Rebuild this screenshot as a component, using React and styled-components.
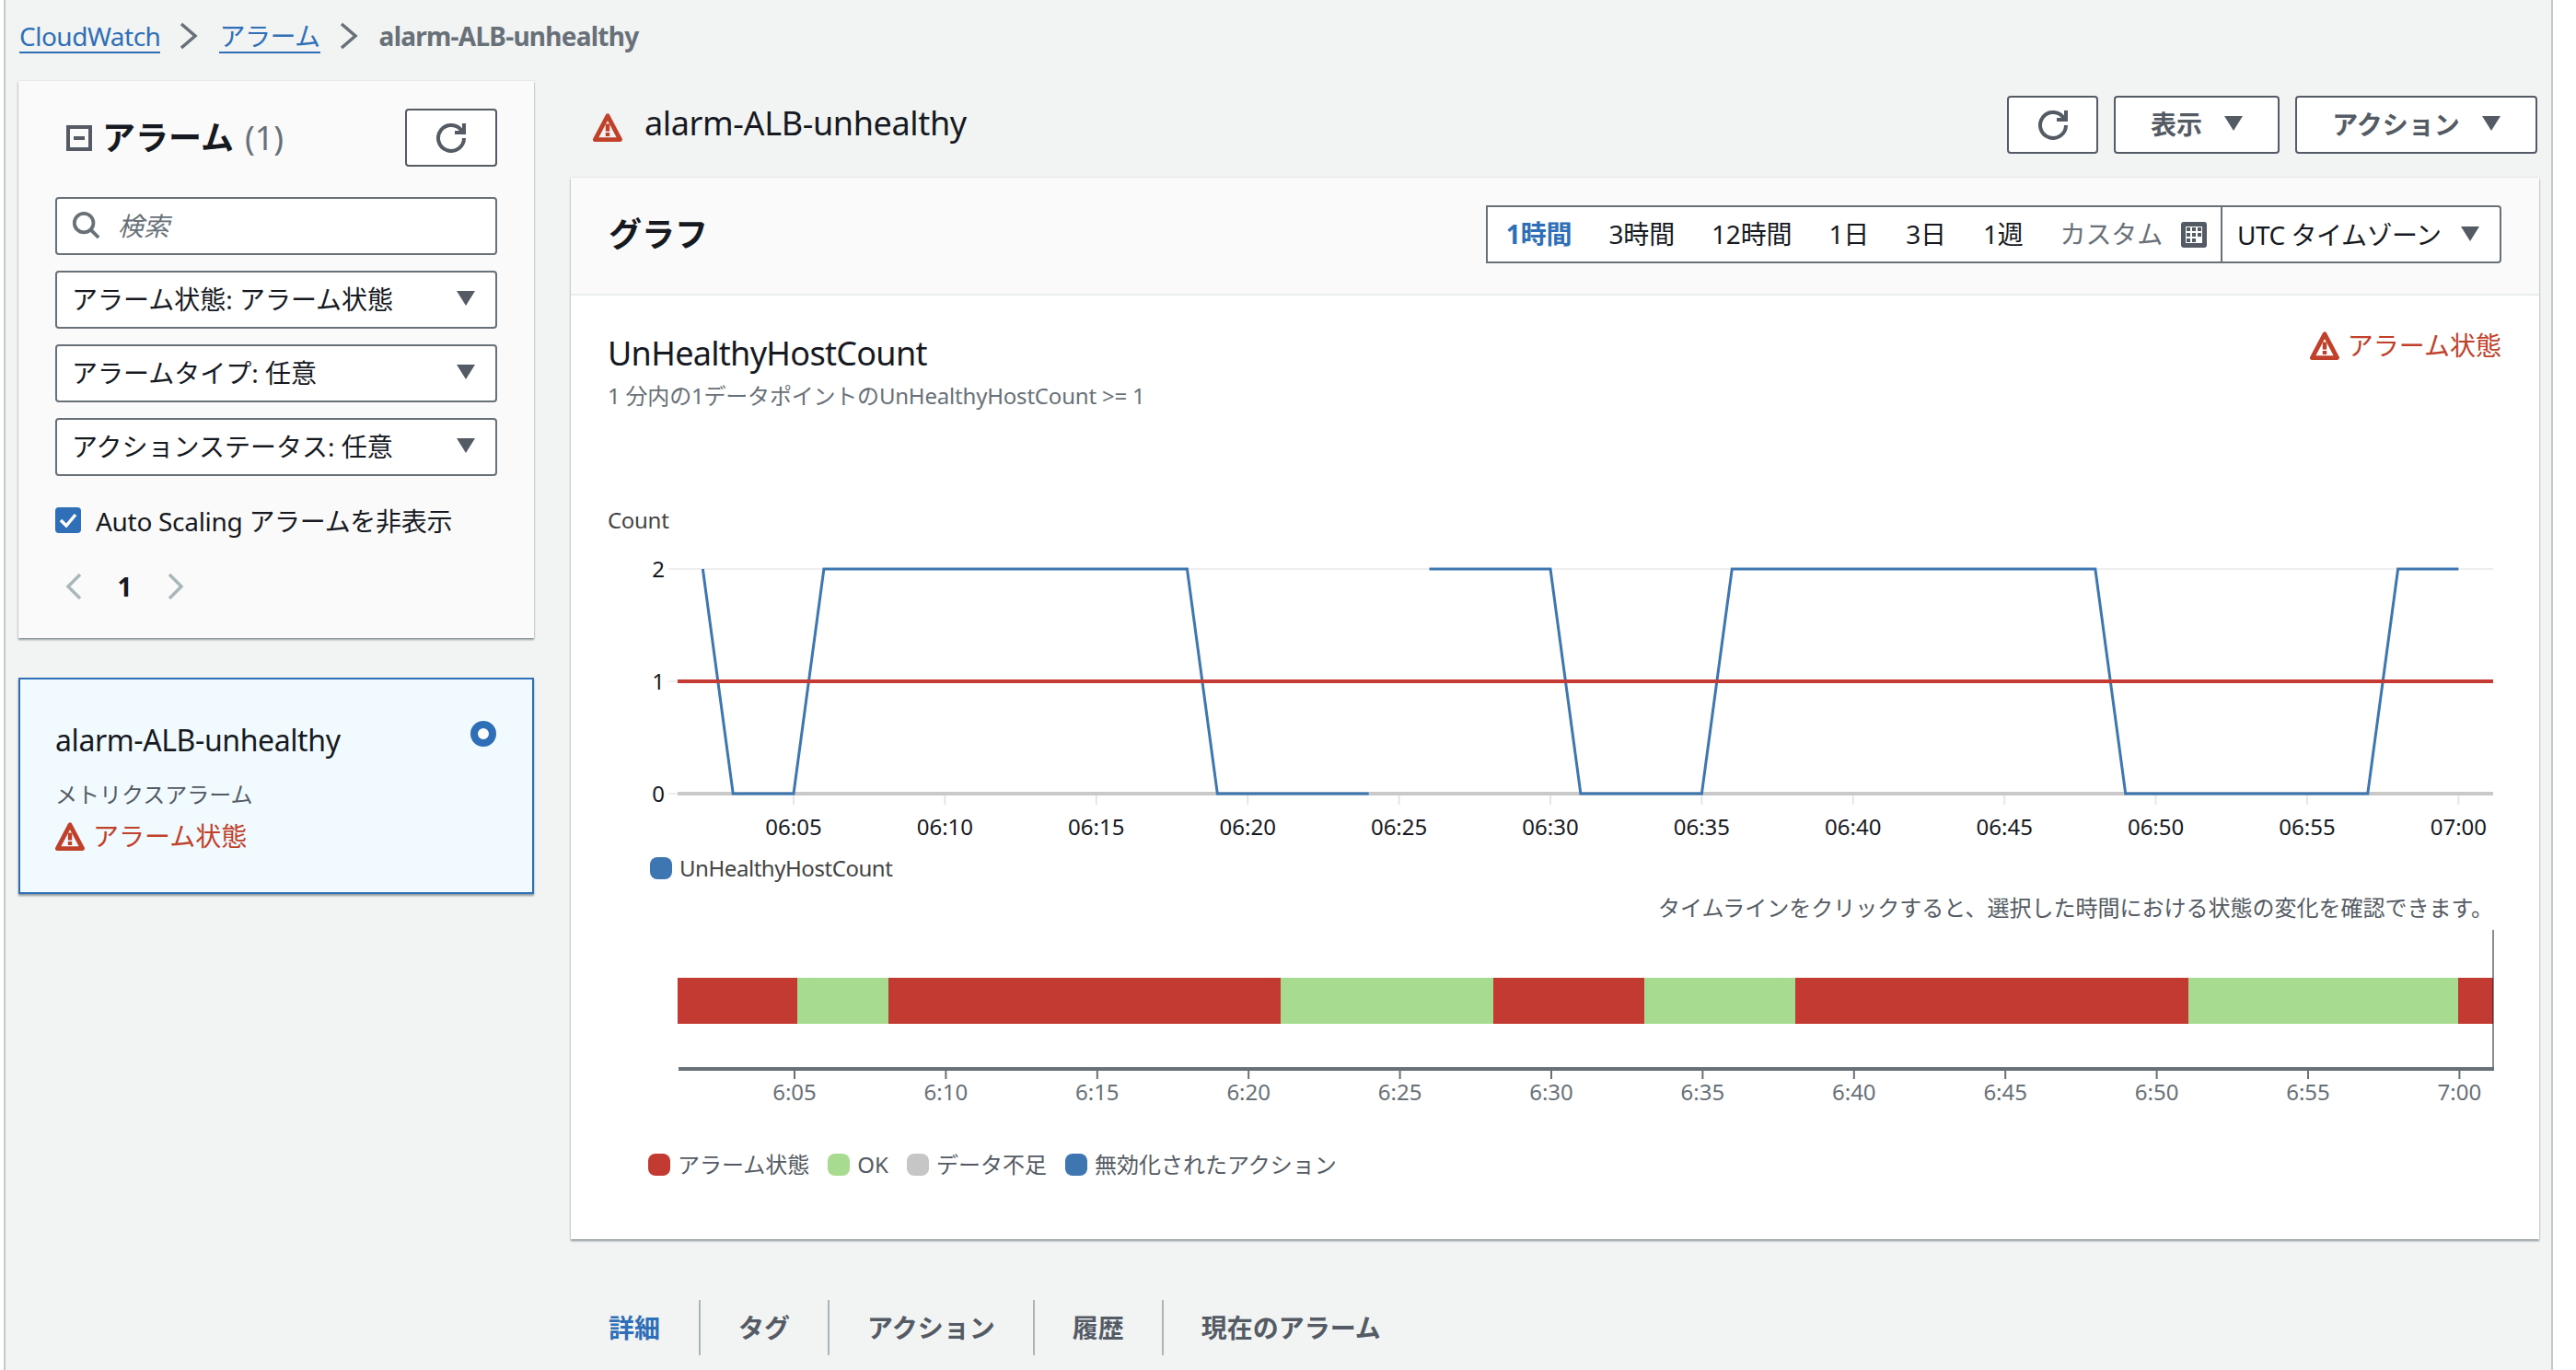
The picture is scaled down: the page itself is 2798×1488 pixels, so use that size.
import React from 'react'
import styled, { createGlobalStyle } from 'styled-components'

const BLUE = '#2f6fb7'
const RED = '#c0402a'
const FONT = `"Noto Sans", "Noto Sans CJK JP", sans-serif`

const GlobalStyle = createGlobalStyle`
html, body {
    margin: 0;
    padding: 0;
    background: #fff;
    font-family: ${FONT};
    color: #16191f;
    overflow: hidden;
}
* { box-sizing: border-box; }
`

const Shell = styled.div`
width: 2769px;
height: 1488px;
margin-left: 4px;
padding: 0 12px 0 14px;
background: #f2f3f3;
border-left: 2px solid #c6c8c8;
border-right: 2px solid #c6c8c8;
overflow: hidden;
`

const Breadcrumbs = styled.nav`
height: 88px;
display: flex;
align-items: flex-start;
padding-top: 20px;
padding-left: 1px;
font-size: 28px;
line-height: 40px;
`

const Crumb = styled.a`
color: ${BLUE};
border-bottom: 2px solid ${BLUE};
height: 38px;
line-height: 38px;
letter-spacing: -0.5px;
`

const CrumbSep = styled.svg`
width: 24px;
height: 32px;
margin: 3px 20px 0 20px;
fill: none;
stroke: #687078;
stroke-width: 3.5;
`

const CrumbCurrent = styled.span`
color: #687078;
font-weight: 700;
line-height: 38px;
letter-spacing: -0.75px;
`

const Columns = styled.div`
display: flex;
align-items: flex-start;
gap: 40px;
`

const Sidebar = styled.aside`
width: 560px;
flex: none;
display: flex;
flex-direction: column;
gap: 43px;
`

const Card = styled.section`
background: #fafafa;
box-shadow: 0 2px 2px rgba(0, 28, 36, 0.4), 0 0 2px rgba(0, 28, 36, 0.15);
`

const FilterCard = styled(Card)`
height: 605px;
padding: 30px 40px 0;
display: flex;
flex-direction: column;
`

const FilterHead = styled.div`
display: flex;
align-items: center;
height: 63px;
margin-bottom: 33px;
padding-left: 12px;
`

const FilterTitle = styled.h2`
margin: 0 0 0 11px;
flex: 1;
font-size: 36px;
font-weight: 700;
line-height: 44px;
`

const Count = styled.span`
color: #687078;
font-weight: 400;
margin-left: 12px;
`

const IconButton = styled.button`
flex: none;
width: ${p => p.$width}px;
height: 63px;
padding: 0;
background: #fff;
border: 2px solid #545b64;
border-radius: 4px;
display: flex;
align-items: center;
justify-content: center;
`

const Field = styled.div`
height: 63px;
padding: 0 22px 3px 16px;
margin-bottom: 17px;
background: #fff;
border: 2px solid #687078;
border-radius: 4px;
display: flex;
align-items: center;
justify-content: space-between;
font-size: 28px;
white-space: nowrap;
`

const SearchField = styled(Field)`
justify-content: flex-start;
gap: 20px;
color: #687078;
font-style: italic;
`

const CheckRow = styled.label`
display: flex;
align-items: center;
gap: 16px;
height: 32px;
margin-top: 15px;
font-size: 28px;
letter-spacing: -0.3px;
white-space: nowrap;
`

const CheckBox = styled.span`
width: 28px;
height: 28px;
border-radius: 4px;
background: ${BLUE};
display: flex;
align-items: center;
justify-content: center;
`

const Pager = styled.div`
display: flex;
align-items: center;
height: 32px;
margin-top: 40px;
padding-left: 11px;
`

const PageNumber = styled.span`
width: 93px;
text-align: center;
font-size: 28px;
font-weight: 700;
`

const AlarmCard = styled.section`
height: 235px;
padding: 42px 38px 0;
background: #f1faff;
border: 2px solid ${BLUE};
box-shadow: 0 2px 2px rgba(0, 28, 36, 0.4);
display: flex;
flex-direction: column;
`

const AlarmName = styled.div`
display: flex;
align-items: flex-start;
justify-content: space-between;
font-size: 32px;
line-height: 48px;
letter-spacing: -0.4px;
`

const Radio = styled.span`
width: 28px;
height: 28px;
margin: 3px 1px 0 0;
border-radius: 50%;
border: 8px solid ${BLUE};
background: #fff;
`

const AlarmType = styled.div`
margin: 18px 0 10px;
font-size: 24px;
line-height: 34px;
color: #545b64;
`

const Status = styled.div`
display: flex;
align-items: center;
gap: 9px;
color: ${RED};
font-size: 28px;
line-height: 36px;
`

const MetricStatus = styled(Status)`
margin-top: -2px;
`

const Main = styled.main`
width: 2138px;
flex: none;
`

const MainHead = styled.header`
height: 105px;
padding: 16px 2px 0 24px;
display: flex;
align-items: flex-start;
`

const HeadIcon = styled.span`
display: flex;
height: 63px;
align-items: center;
padding-top: 4px;
`

const AlarmTitle = styled.h1`
flex: 1;
margin: 0 0 0 24px;
font-size: 36px;
font-weight: 400;
line-height: 59px;
letter-spacing: -0.37px;
`

const ActionRow = styled.div`
display: flex;
gap: 17px;
`

const ActionButton = styled.button`
height: 63px;
width: ${p => p.$width}px;
padding: 0 0 3px;
background: #fff;
border: 2px solid #545b64;
border-radius: 4px;
display: flex;
align-items: center;
justify-content: center;
gap: 24px;
font-family: inherit;
font-size: 28px;
font-weight: 700;
color: #545b64;
`

const GraphCard = styled.section`
height: 1153px;
background: #fff;
box-shadow: 0 2px 2px rgba(0, 28, 36, 0.4), 0 0 2px rgba(0, 28, 36, 0.15);
`

const GraphHead = styled.div`
height: 128px;
padding: 0 41px 3px;
background: #fafafa;
border-bottom: 2px solid #eaeded;
display: flex;
align-items: center;
justify-content: space-between;
`

const GraphTitle = styled.h2`
margin: 0 0 5px;
font-size: 36px;
font-weight: 700;
`

const RangeGroup = styled.div`
height: 63px;
display: flex;
background: #fff;
border: 2px solid #687078;
border-radius: 0 4px 4px 0;
font-size: 28px;
white-space: nowrap;
`

const RangeItem = styled.span`
padding: 0 20px;
line-height: 59px;
letter-spacing: -0.15px;
color: ${p => (p.$active ? BLUE : p.$muted ? '#687078' : '#16191f')};
font-weight: ${p => (p.$active ? 700 : 400)};
`

const CalendarSlot = styled.span`
display: flex;
align-items: center;
padding-right: 15px;
`

const ZoneSelect = styled.span`
width: 303px;
padding: 0 22px 1px 16px;
border-left: 2px solid #687078;
display: flex;
align-items: center;
justify-content: space-between;
letter-spacing: -0.5px;
`

const MetricHead = styled.div`
padding: 38px 41px 0 40px;
display: flex;
justify-content: space-between;
align-items: flex-start;
`

const MetricTitle = styled.h3`
margin: 0;
font-size: 36px;
font-weight: 400;
line-height: 50px;
letter-spacing: -0.7px;
`

const MetricNote = styled.p`
margin: 4px 0 0;
padding: 0 41px 0 40px;
font-size: 24px;
line-height: 34px;
letter-spacing: -0.2px;
color: #687078;
`

const AxisName = styled.div`
margin-top: 101px;
padding: 0 40px;
font-size: 24px;
line-height: 34px;
letter-spacing: -0.3px;
color: #444;
`

const ChartSvg = styled.svg`
display: block;
width: 2138px;
height: ${p => p.$height}px;
margin-top: ${p => p.$top || 0}px;
`

const ChartText = styled.text`
font-family: ${FONT};
font-size: 24px;
fill: ${p => p.$color || '#16191f'};
text-anchor: ${p => p.$anchor || 'middle'};
`

const Legend = styled.ul`
list-style: none;
margin: ${p => p.$top || 0}px 0 0;
padding: 0 0 0 ${p => p.$left}px;
display: flex;
gap: 20px;
font-size: 24px;
line-height: 34px;
letter-spacing: ${p => p.$spacing || 0}px;
color: ${p => p.$color};
`

const LegendItem = styled.li`
display: flex;
align-items: center;
gap: 8px;
`

const Swatch = styled.span`
width: 24px;
height: 24px;
border-radius: 8px;
background: ${p => p.$color};
`

const TimelineHint = styled.p`
margin: 9px 0 0;
padding-right: 50px;
text-align: right;
font-size: 24px;
line-height: 34px;
color: #545b64;
`

const Tabs = styled.nav`
margin-top: 66px;
height: 60px;
display: flex;
align-items: center;
font-size: 28px;
font-weight: 700;
color: #545b64;
`

const Tab = styled.span`
padding: 0 41px;
line-height: 60px;
border-left: 2px solid #aab7b8;
color: ${p => (p.$active ? BLUE : '#545b64')};
&:first-child { border-left: 0; padding-right: 42px; }
`

const Warning = ({ size = 32 }) => (
    <svg width={size} height={size} viewBox="0 0 16 16" style={{ flex: 'none' }}>
        <path d="M8 1.9 1.2 14.8h13.6z" fill="none" stroke={RED} strokeWidth="2.4" strokeLinejoin="round" />
        <rect x="6.9" y="6.3" width="2.2" height="4" fill={RED} />
        <rect x="6.9" y="11" width="2.2" height="2" fill={RED} />
    </svg>
)

const Refresh = () => (
    <svg width="32" height="32" viewBox="0 0 16 16" fill="none" stroke="#545b64" strokeWidth="2">
        <path d="M10 5h5V0" />
        <path d="M15 8a7 7 0 1 1-1.1-3.8" />
    </svg>
)

const Caret = ({ color = '#545b64' }) => (
    <svg width="20" height="18" viewBox="0 0 20 18" style={{ flex: 'none' }}>
        <path d="M0 1h20L10 17z" fill={color} />
    </svg>
)

const Chevron = ({ dir }) => (
    <svg width="18" height="30" viewBox="0 0 18 30" fill="none" stroke="#aab7b8" strokeWidth="3.5">
        <path d={dir === 'left' ? 'M16 2 3 15l13 13' : 'M2 2l13 13L2 28'} />
    </svg>
)

const CrumbArrow = () => (
    <CrumbSep viewBox="0 0 24 32">
        <path d="M3 3l15 13L3 29" />
    </CrumbSep>
)

const Calendar = () => (
    <svg width="28" height="28" viewBox="0 0 28 28">
        <rect width="28" height="28" rx="3" fill="#545b64" />
        <rect x="5" y="5" width="18" height="18" fill="#fff" />
        <path d="M6 6h4v4H6zM12 6h4v4h-4zM18 6h4v4h-4zM6 12h4v4H6zM12 12h4v4h-4zM18 12h4v4h-4zM6 18h4v4H6zM12 18h4v4h-4z" fill="#545b64" />
    </svg>
)

const xAt = min => 862 + (min - 5) * 32.88
const Y2 = 618
const Y0 = 862
const toPoints = pts => pts.map(([m, y]) => `${xAt(m)},${y}`).join(' ')

const segments = [
    [[2, Y2], [3, Y0], [5, Y0], [6, Y2], [18, Y2], [19, Y0], [24, Y0]],
    [[26, Y2], [30, Y2], [31, Y0], [35, Y0], [36, Y2], [48, Y2], [49, Y0], [57, Y0], [58, Y2], [60, Y2]],
]

const MINUTES = [5, 10, 15, 20, 25, 30, 35, 40, 45, 50, 55, 60]
const label = (m, prefix) => {
    const h = m === 60 ? 7 : 6
    const mm = String(m % 60).padStart(2, '0')
    return `${prefix}${h}:${mm}`
}

const MetricChart = () => (
    <ChartSvg $height={330} $top={18} viewBox="620 600 2138 330">
        <line x1="726" x2="2708" y1={Y2} y2={Y2} stroke="#eeeeee" strokeWidth="2" />
        <line x1="726" x2="736" y1="740" y2="740" stroke="#eeeeee" strokeWidth="2" />
        <line x1="726" x2="736" y1={Y0} y2={Y0} stroke="#eeeeee" strokeWidth="2" />
        <line x1="736" x2="2708" y1={Y0} y2={Y0} stroke="#c9c9c9" strokeWidth="4" />
        {MINUTES.map(m => (
            <line key={m} x1={xAt(m)} x2={xAt(m)} y1="864" y2="874" stroke="#e6e6e6" strokeWidth="2" />
        ))}
        {segments.map((s, i) => (
            <polyline key={i} points={toPoints(s)} fill="none" stroke="#3d76b0" strokeWidth="3" />
        ))}
        <line x1="736" x2="2708" y1="740" y2="740" stroke="#c53a32" strokeWidth="4" />
        <ChartText x="722" y="627" $anchor="end">2</ChartText>
        <ChartText x="722" y="749" $anchor="end">1</ChartText>
        <ChartText x="722" y="871" $anchor="end">0</ChartText>
        {MINUTES.map(m => (
            <ChartText key={m} x={xAt(m)} y="907">{label(m, '0')}</ChartText>
        ))}
    </ChartSvg>
)

const timeline = [
    [736, 866, '#c33a32'],
    [866, 965, '#a7dc90'],
    [965, 1391, '#c33a32'],
    [1391, 1622, '#a7dc90'],
    [1622, 1786, '#c33a32'],
    [1786, 1950, '#a7dc90'],
    [1950, 2377, '#c33a32'],
    [2377, 2670, '#a7dc90'],
    [2670, 2708, '#c33a32'],
]

const TimelineChart = () => (
    <ChartSvg $height={200} $top={2} viewBox="620 1005 2138 200">
        {timeline.map(([a, b, c]) => (
            <rect key={a} x={a} y="1062" width={b - a} height="50" fill={c} />
        ))}
        <line x1="2708" x2="2708" y1="1010" y2="1160" stroke="#16191f" strokeWidth="1" />
        <line x1="737" x2="2709" y1="1161" y2="1161" stroke="#687078" strokeWidth="4" />
        {MINUTES.map(m => (
            <line key={m} x1={xAt(m) + 1} x2={xAt(m) + 1} y1="1161" y2="1172" stroke="#687078" strokeWidth="2" />
        ))}
        {MINUTES.map(m => (
            <ChartText key={m} x={xAt(m) + 1} y="1195" $color="#687078">{label(m, '')}</ChartText>
        ))}
    </ChartSvg>
)

const ranges = ['3時間', '12時間', '1日', '3日', '1週']
const states = [
    ['アラーム状態', '#c33a32'],
    ['OK', '#a7dc90'],
    ['データ不足', '#c6c6c6'],
    ['無効化されたアクション', '#3d76b0'],
]
const tabs = ['タグ', 'アクション', '履歴', '現在のアラーム']

const App = () => {
    return (
        <Shell>
            <GlobalStyle />
            <Breadcrumbs>
                <Crumb>CloudWatch</Crumb>
                <CrumbArrow />
                <Crumb>アラーム</Crumb>
                <CrumbArrow />
                <CrumbCurrent>alarm-ALB-unhealthy</CrumbCurrent>
            </Breadcrumbs>
            <Columns>
                <Sidebar>
                    <FilterCard>
                        <FilterHead>
                            <svg width="28" height="28" viewBox="0 0 14 14" fill="none" stroke="#545b64" strokeWidth="2">
                                <rect x="1" y="1" width="12" height="12" />
                                <path d="M4 7h6" />
                            </svg>
                            <FilterTitle>アラーム<Count>(1)</Count></FilterTitle>
                            <IconButton $width={100}><Refresh /></IconButton>
                        </FilterHead>
                        <SearchField>
                            <svg width="30" height="30" viewBox="0 0 16 16" fill="none" stroke="#687078" strokeWidth="2">
                                <circle cx="7" cy="7" r="5.5" />
                                <path d="M11 11l4.5 4.5" />
                            </svg>
                            検索
                        </SearchField>
                        <Field>アラーム状態: アラーム状態<Caret /></Field>
                        <Field>アラームタイプ: 任意<Caret /></Field>
                        <Field>アクションステータス: 任意<Caret /></Field>
                        <CheckRow>
                            <CheckBox>
                                <svg width="20" height="20" viewBox="0 0 20 20" fill="none" stroke="#fff" strokeWidth="3.5">
                                    <path d="M2 10l6 6L18 4" />
                                </svg>
                            </CheckBox>
                            Auto Scaling アラームを非表示
                        </CheckRow>
                        <Pager>
                            <Chevron dir="left" />
                            <PageNumber>1</PageNumber>
                            <Chevron dir="right" />
                        </Pager>
                    </FilterCard>
                    <AlarmCard>
                        <AlarmName>alarm-ALB-unhealthy<Radio /></AlarmName>
                        <AlarmType>メトリクスアラーム</AlarmType>
                        <Status><Warning />アラーム状態</Status>
                    </AlarmCard>
                </Sidebar>
                <Main>
                    <MainHead>
                        <HeadIcon><Warning /></HeadIcon>
                        <AlarmTitle>alarm-ALB-unhealthy</AlarmTitle>
                        <ActionRow>
                            <IconButton $width={99}><Refresh /></IconButton>
                            <ActionButton $width={180}>表示<Caret /></ActionButton>
                            <ActionButton $width={263}>アクション<Caret /></ActionButton>
                        </ActionRow>
                    </MainHead>
                    <GraphCard>
                        <GraphHead>
                            <GraphTitle>グラフ</GraphTitle>
                            <RangeGroup>
                                <RangeItem $active>1時間</RangeItem>
                                {ranges.map(r => <RangeItem key={r}>{r}</RangeItem>)}
                                <RangeItem $muted>カスタム</RangeItem>
                                <CalendarSlot><Calendar /></CalendarSlot>
                                <ZoneSelect>UTC タイムゾーン<Caret /></ZoneSelect>
                            </RangeGroup>
                        </GraphHead>
                        <MetricHead>
                            <MetricTitle>UnHealthyHostCount</MetricTitle>
                            <MetricStatus><Warning />アラーム状態</MetricStatus>
                        </MetricHead>
                        <MetricNote>1 分内の1データポイントのUnHealthyHostCount &gt;= 1</MetricNote>
                        <AxisName>Count</AxisName>
                        <MetricChart />
                        <Legend $left={86} $top={-4} $spacing={-0.45} $color="#444">
                            <LegendItem><Swatch $color="#3d76b0" />UnHealthyHostCount</LegendItem>
                        </Legend>
                        <TimelineHint>タイムラインをクリックすると、選択した時間における状態の変化を確認できます。</TimelineHint>
                        <TimelineChart />
                        <Legend $left={84} $top={43} $color="#545b64">
                            {states.map(([name, color]) => (
                                <LegendItem key={name}><Swatch $color={color} />{name}</LegendItem>
                            ))}
                        </Legend>
                    </GraphCard>
                    <Tabs>
                        <Tab $active>詳細</Tab>
                        {tabs.map(t => <Tab key={t}>{t}</Tab>)}
                    </Tabs>
                </Main>
            </Columns>
        </Shell>
    )
}

export default App
